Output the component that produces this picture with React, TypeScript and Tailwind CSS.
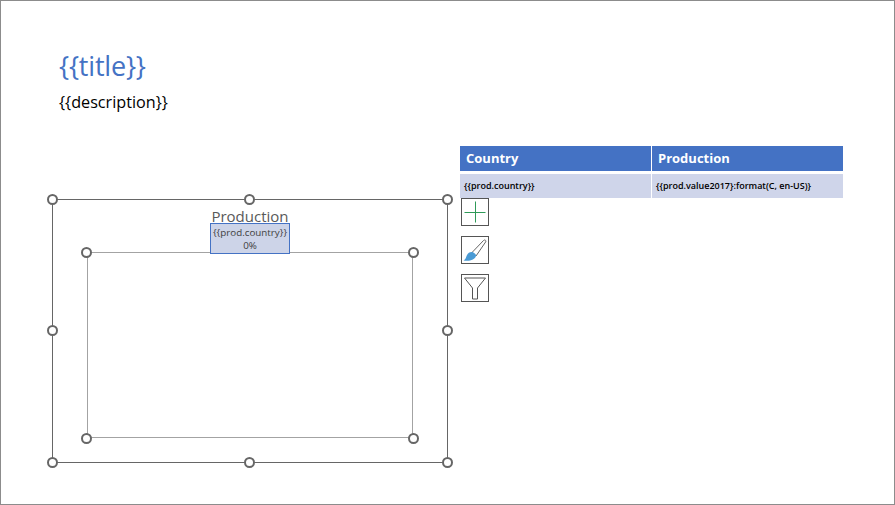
const F = { fontFamily: '"Open Sans", "Noto Sans", sans-serif' };

function Handle({ shift }: { shift?: boolean }) {
  return <span className={`block w-[11px] h-[11px] rounded-full border-2 border-[#666] bg-white ${shift ? "-translate-x-px" : ""}`} />;
}

function HandleRow({ count, className = "" }: { count: number; className?: string }) {
  return (
    <div className={`flex justify-between ${className}`}>
      {Array.from({ length: count }).map((_, i) => (
        <Handle key={i} shift={count === 3 && i === 1} />
      ))}
    </div>
  );
}

function IconBox({ children }: { children: React.ReactNode }) {
  return <div className="w-[28px] h-[28px] border border-[#555] bg-white">{children}</div>;
}

const cellHead = "h-[25px] bg-[#4472c4] text-white font-bold text-[13px] leading-[25px] pl-[6px]";
const cellBody = "h-[24px] bg-[#cfd5ea] text-black font-semibold text-[9px] leading-[24px] pl-[4px]";

export default function App() {
  return (
    <div style={F} className="flex flex-col w-[895px] h-[505px] bg-white border border-[#8c8c8c] overflow-hidden">
      <div className="pl-[58px] pt-[46px]">
        <div className="text-[27px] leading-[37px] text-[#4472c4] tracking-[-0.2px]">{"{{title}}"}</div>
        <div className="mt-[7px] text-[16.2px] leading-[22px] text-black">{"{{description}}"}</div>
      </div>

      <div className="flex items-start gap-[12px] pl-[51px] pt-[33px]">
        {/* chart */}
        <div className="relative mt-[53px] flex flex-col items-center w-[396px] h-[264px] border border-[#666]">
          <div className="mt-[9px] text-center text-[15px] leading-[14px] text-[#595959]">Production</div>
          <div className="relative z-10 w-[80px] h-[31px] bg-[#cdd4e8] border border-[#4472c4] flex flex-col items-center justify-center text-[9.8px] leading-[13px] text-[#404040]">
            <span>{"{{prod.country}}"}</span>
            <span>0%</span>
          </div>
          <div className="relative -mt-[2px] w-[326px] h-[186px] border border-[#a3a3a3]">
            <div className="absolute -left-[7px] -right-[7px] -top-[6px] -bottom-[7px] flex flex-col justify-between">
              <HandleRow count={2} />
              <HandleRow count={2} />
            </div>
          </div>
          <div className="absolute -inset-[6px] flex flex-col justify-between">
            <HandleRow count={3} />
            <HandleRow count={2} className="-translate-y-px" />
            <HandleRow count={3} />
          </div>
        </div>

        {/* table and tool buttons */}
        <div className="w-[383px]">
          <div className="grid grid-cols-[191px_1fr] gap-x-[1px]">
            <div className={cellHead}>Country</div>
            <div className={cellHead}>Production</div>
          </div>
          <div className="mt-[3px] grid grid-cols-[191px_1fr] gap-x-[1px]">
            <div className={cellBody}>{"{{prod.country}}"}</div>
            <div className={cellBody}>{"{{prod.value2017}:format(C, en-US)}"}</div>
          </div>
          <div className="ml-[1px] flex flex-col gap-[10px]">
            <IconBox>
              <svg viewBox="0 0 26 26" className="w-full h-full">
                <path d="M13.5 2.5V23.5M2.5 13.5H23.5" stroke="#2f9a58" strokeWidth="1" fill="none" />
              </svg>
            </IconBox>
            <IconBox>
              <svg viewBox="0 0 26 26" className="w-full h-full">
                <path d="M10 15.5L21.5 3.5C22.7 2.2 24.6 3.6 23.6 5L14 19Z" fill="#fff" stroke="#666" strokeWidth="1" />
                <path d="M9.5 15C11.5 15 14.5 17.2 14 19C13 22.5 7.5 24.8 1.5 23.5C3.8 22.5 4 20 5 18C6 16 7.5 15 9.5 15Z" fill="#4a9ad4" />
              </svg>
            </IconBox>
            <IconBox>
              <svg viewBox="0 0 26 26" className="w-full h-full">
                <path d="M2.5 3H23.5L15.5 13V24H10.5V13Z" fill="none" stroke="#555" strokeWidth="1" />
              </svg>
            </IconBox>
          </div>
        </div>
      </div>
    </div>
  );
}
